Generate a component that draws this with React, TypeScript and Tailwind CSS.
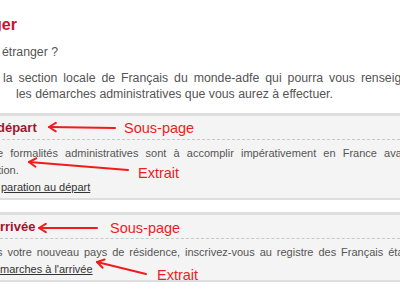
const ROUGE = "#f01c1c";

type Fleche = { x1: number; y1: number; x2: number; y2: number };

// annotations : pointe (x1,y1), queue (x2,y2)
const fleches: Fleche[] = [
  { x1: 49, y1: 127, x2: 115, y2: 128 },
  { x1: 29, y1: 162, x2: 128, y2: 170 },
  { x1: 39, y1: 228, x2: 97, y2: 228 },
  { x1: 97, y1: 262, x2: 146, y2: 274 },
];

function Pointe({ x1, y1, x2, y2 }: Fleche) {
  const a = Math.atan2(y2 - y1, x2 - x1);
  const l = 8;
  const p1 = `${x1 + l * Math.cos(a + 0.55)},${y1 + l * Math.sin(a + 0.55)}`;
  const p2 = `${x1 + l * Math.cos(a - 0.55)},${y1 + l * Math.sin(a - 0.55)}`;
  return (
    <g stroke={ROUGE} strokeWidth={2} fill="none" strokeLinecap="round" strokeLinejoin="round">
      <line x1={x1} y1={y1} x2={x2} y2={y2} />
      <polyline points={`${p1} ${x1},${y1} ${p2}`} />
    </g>
  );
}

function Ligne({ texte, ml, w }: { texte: string; ml: number; w: number }) {
  return (
    <span
      className="block whitespace-nowrap text-justify [text-align-last:justify]"
      style={{ marginLeft: ml, width: w }}
    >
      {texte}
    </span>
  );
}

function Bloc({
  titre,
  titreMl,
  lignes,
  lien,
  lienMl,
}: {
  titre: string;
  titreMl: number;
  lignes: { texte: string; ml: number; w?: number }[];
  lien: string;
  lienMl: number;
}) {
  return (
    <div className="-mx-5 border-t-[3px] border-b-2 border-[#dedede] bg-[#f4f4f4] px-5 pb-[2px]">
      <h2
        className="whitespace-nowrap border-b border-dashed border-[#c8c8c8] pt-[3px] pb-[2px] text-[13px] font-bold leading-[18px] text-[#a5122c]"
        style={{ marginLeft: titreMl }}
      >
        {titre}
      </h2>
      <div className="pt-[5px] text-[11px] leading-[17px] text-[#555]">
        {lignes.map((l) =>
          l.w ? (
            <Ligne key={l.texte} texte={l.texte} ml={l.ml} w={l.w} />
          ) : (
            <span key={l.texte} className="block whitespace-nowrap" style={{ marginLeft: l.ml }}>
              {l.texte}
            </span>
          )
        )}
        <a href="#" className="block whitespace-nowrap text-[#333] underline" style={{ marginLeft: lienMl }}>
          {lien}
        </a>
      </div>
    </div>
  );
}

export default function App() {
  return (
    <div className="relative h-[300px] w-[400px] overflow-hidden bg-white font-['Liberation_Sans',Arial,sans-serif]">
      <h1 className="-ml-[8px] mt-[15px] text-[16px] font-bold leading-[20px] text-[#c8102e]">ger</h1>

      <p className="ml-[2px] mt-[9px] text-[12.3px] leading-[16px] text-[#555]">étranger ?</p>

      <p className="mt-[10px] text-[12.3px] leading-[16px] text-[#555]">
        <Ligne texte="la section locale de Français du monde-adfe qui pourra vous renseigner" ml={3} w={416} />
        <span className="ml-[16px] block whitespace-nowrap">
          les démarches administratives que vous aurez à effectuer.
        </span>
      </p>

      <div className="mt-[11px]">
        <Bloc
          titre="départ"
          titreMl={-3}
          lignes={[
            {
              texte: "e formalités administratives sont à accomplir impérativement en France avant",
              ml: -3,
              w: 414,
            },
            { texte: "tion.", ml: -2 },
          ]}
          lien="paration au départ"
          lienMl={1}
        />
      </div>

      <div className="mt-[12px]">
        <Bloc
          titre="rrivée"
          titreMl={0}
          lignes={[
            {
              texte: "s votre nouveau pays de résidence, inscrivez-vous au registre des Français établis",
              ml: -3,
              w: 423,
            },
          ]}
          lien="marches à l'arrivée"
          lienMl={0}
        />
      </div>

      <svg className="pointer-events-none absolute inset-0" width={400} height={300} viewBox="0 0 400 300">
        {fleches.map((f, i) => (
          <Pointe key={i} {...f} />
        ))}
      </svg>
      <span className="absolute left-[124px] top-[119px] text-[14.5px] leading-[18px] text-[#f01c1c]">Sous-page</span>
      <span className="absolute left-[138px] top-[164px] text-[14.5px] leading-[18px] text-[#f01c1c]">Extrait</span>
      <span className="absolute left-[110px] top-[219px] text-[14.5px] leading-[18px] text-[#f01c1c]">Sous-page</span>
      <span className="absolute left-[157px] top-[266px] text-[14.5px] leading-[18px] text-[#f01c1c]">Extrait</span>
    </div>
  );
}
